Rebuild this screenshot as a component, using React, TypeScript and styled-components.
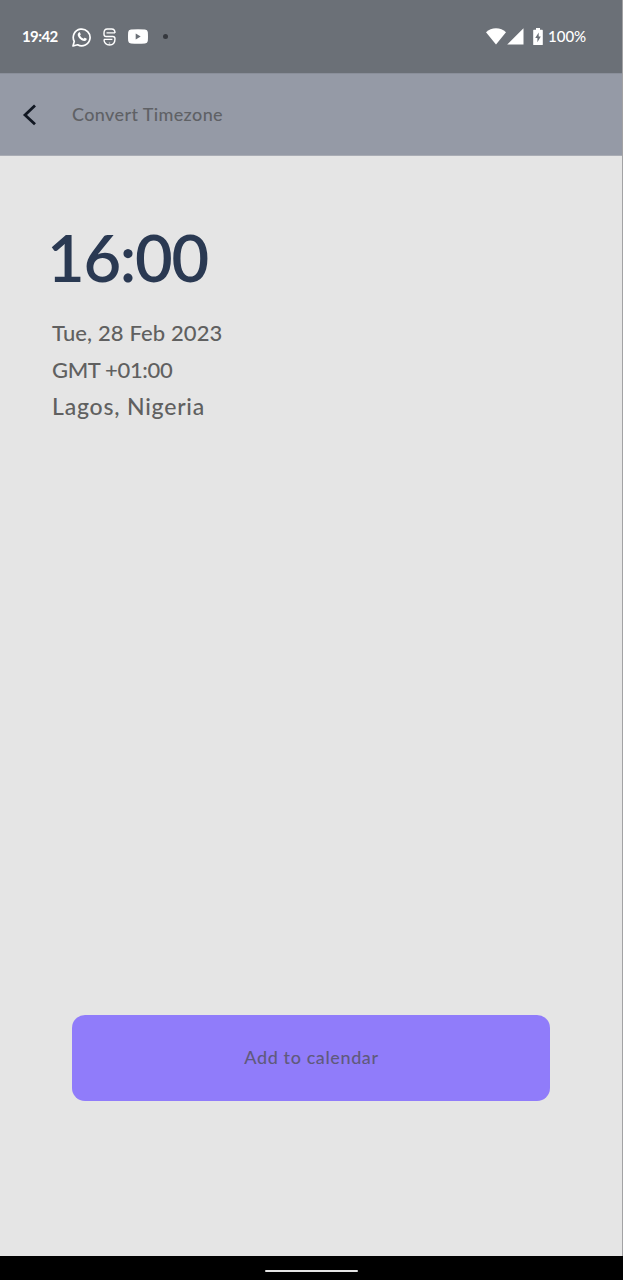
import React from "react";
import styled, { createGlobalStyle } from "styled-components";

const GlobalStyle = createGlobalStyle`
  * { box-sizing: border-box; }
  body { margin: 0; background: #e5e5e5; font-family: Lato, "Open Sans", sans-serif; }
  button { font-family: inherit; }
`;

const Screen = styled.div`
  display: flex;
  flex-direction: column;
  height: 1280px;
  overflow: hidden;
  background: #e5e5e5;
`;

const Display = styled.div`
  flex: 1;
  display: flex;
  flex-direction: column;
  border-right: 1px solid #a2a2a4;
`;

const StatusBar = styled.div`
  height: 73px;
  display: flex;
  justify-content: space-between;
  align-items: center;
  padding: 0 35px 0 22px;
  background: #6b7077;
  color: #fff;
`;

const StatusGroup = styled.div`
  display: flex;
  align-items: center;
  svg { display: block; flex: none; }
`;

const StatusText = styled.span<{ $width: number; $bold?: boolean; $spacing: number }>`
  width: ${(p) => p.$width}px;
  padding-bottom: 1px;
  font-size: 15px;
  line-height: 20px;
  font-weight: ${(p) => (p.$bold ? 700 : 500)};
  letter-spacing: ${(p) => p.$spacing}px;
  white-space: nowrap;
`;

const Dot = styled.span`
  width: 5px;
  height: 5px;
  margin-left: 15px;
  border-radius: 50%;
  background: #35383e;
`;

const Header = styled.header`
  height: 83px;
  display: flex;
  align-items: center;
  padding-left: 22px;
  background: #959aa6;
  border-top: 1px solid #8a8f9a;
  border-bottom: 1px solid #a9acb4;
`;

const BackButton = styled.button`
  width: 50px;
  padding: 0;
  border: 0;
  background: none;
  svg { display: block; }
`;

const Title = styled.h1`
  margin: 0;
  padding-bottom: 2px;
  font-size: 18px;
  line-height: 24px;
  font-weight: 500;
  letter-spacing: 0.38px;
  color: #5f6165;
`;

const Content = styled.main`
  flex: 1;
  display: flex;
  flex-direction: column;
  padding: 61px 72px 155px 52px;
`;

const Time = styled.div`
  margin-left: -5px;
  font-size: 65px;
  line-height: 80px;
  font-weight: 600;
  letter-spacing: -1.3px;
  color: #2a3952;
`;

const Details = styled.div`
  margin-top: 18px;
  font-size: 22px;
  line-height: 36.5px;
  font-weight: 500;
  color: #606060;
`;

const Detail = styled.div<{ $spacing: number; $size?: number }>`
  font-size: ${(p) => p.$size ?? 22}px;
  letter-spacing: ${(p) => p.$spacing}px;
`;

const CalendarButton = styled.button`
  height: 86px;
  margin: auto 0 0 20px;
  padding: 0 0 2px 1px;
  border: 0;
  border-radius: 13px;
  background: #907cfa;
  color: #605a7c;
  font-size: 18px;
  font-weight: 500;
  letter-spacing: 0.6px;
`;

const NavigationBar = styled.div`
  height: 24px;
  display: flex;
  justify-content: center;
  padding-top: 14px;
  background: #000;
`;

const Handle = styled.div`
  width: 93px;
  height: 2px;
  border-radius: 1px;
  background: #e4e4e4;
`;

const WhatsAppIcon = () => (
  <svg width="20" height="20" viewBox="0 0 20 20" fill="none">
    <path d="M1 19l1.25-4.6A8.4 8.4 0 1 1 5.6 17.8L1 19z" stroke="#fff" strokeWidth="1.7" strokeLinejoin="round" />
    <path d="M6.8 5.4c.5-.4 1-.2 1.2.2l.7 1.6c.2.4-.6 1-.7 1.3.8 1.5 1.9 2.5 3.5 3.2.4-.2.9-1.1 1.3-.9l1.7.8c.5.3 0 1.6-.5 2-1.2.9-3.1.3-4.7-.7-1.6-1-3-2.7-3.5-4.3-.3-1.2.1-2.4 1-3.2z" fill="#fff" />
  </svg>
);

const SIcon = () => (
  <svg width="13" height="18" viewBox="0 0 13 18" fill="none" stroke="#fff" strokeWidth="1.4">
    <path d="M1 5C1 2.4 2.4 1 4.3 1h4.4C10.6 1 12 2.4 12 5" />
    <path d="M1 5v1.2c0 1.4.8 2.3 2.2 2.3h6.6c1.4 0 2.2.9 2.2 2.3 0 3.8-2.2 6.2-5.5 6.2S1 14.6 1 11.4" />
    <path d="M3.5 4.9H12M.9 11.4h8.5" />
    <path d="M6.5 14.2v2.6" strokeOpacity=".45" />
  </svg>
);

const YouTubeIcon = () => (
  <svg width="20" height="15" viewBox="0 0 20 15">
    <path d="M3 .5Q10-.1 17 .5q2.6.2 2.8 2.6.4 4.4 0 8.8-.2 2.4-2.8 2.6-7 .6-14 0Q.4 14.3.2 11.9-.2 7.5.2 3.1.4.7 3 .5z" fill="#fff" />
    <path d="M7.7 4.5v6l5-3z" fill="#6b7077" />
  </svg>
);

const WifiIcon = () => (
  <svg width="20" height="17" viewBox="0 0 20 17">
    <path d="M0 4.2C2.8 1.6 6.1.2 10 .2s7.2 1.4 10 4L10 16.5z" fill="#fff" />
  </svg>
);

const SignalIcon = () => (
  <svg width="17" height="17" viewBox="0 0 17 17">
    <path d="M16.5.3v16.2H.2z" fill="#fff" />
  </svg>
);

const BatteryIcon = () => (
  <svg width="10" height="17" viewBox="0 0 10 17">
    <path d="M3 0h4v1.8h2.2q.6 0 .6.6v14q0 .6-.6.6H.8q-.6 0-.6-.6v-14q0-.6.6-.6H3z" fill="#fff" />
    <path d="M5.7 4.5L2.2 10h2.2v4.2L7.8 8.6H5.7z" fill="#6b7077" />
  </svg>
);

const BackIcon = () => (
  <svg width="16" height="22" viewBox="0 0 16 22" fill="none">
    <path d="M13 1.5L3 10.9 13 20.3" stroke="#111722" strokeWidth="2.8" />
  </svg>
);

const Spacer = styled.span<{ $size: number }>`
  flex: 0 0 ${(p) => p.$size}px;
`;

export default function App() {
  return (
    <Screen>
      <GlobalStyle />
      <Display>
        <StatusBar>
          <StatusGroup>
            <StatusText $width={50} $bold $spacing={-0.6}>19:42</StatusText>
            <WhatsAppIcon />
            <Spacer $size={11} />
            <SIcon />
            <Spacer $size={12} />
            <YouTubeIcon />
            <Dot />
          </StatusGroup>
          <StatusGroup>
            <WifiIcon />
            <Spacer $size={1} />
            <SignalIcon />
            <Spacer $size={9} />
            <BatteryIcon />
            <Spacer $size={5} />
            <StatusText $width={39} $spacing={0}>100%</StatusText>
          </StatusGroup>
        </StatusBar>
        <Header>
          <BackButton aria-label="Back"><BackIcon /></BackButton>
          <Title>Convert Timezone</Title>
        </Header>
        <Content>
          <Time>16:00</Time>
          <Details>
            <Detail $spacing={0.12}>Tue, 28 Feb 2023</Detail>
            <Detail $spacing={-0.35}>GMT +01:00</Detail>
            <Detail $spacing={0.8} $size={23}>Lagos, Nigeria</Detail>
          </Details>
          <CalendarButton>Add to calendar</CalendarButton>
        </Content>
      </Display>
      <NavigationBar><Handle /></NavigationBar>
    </Screen>
  );
}
